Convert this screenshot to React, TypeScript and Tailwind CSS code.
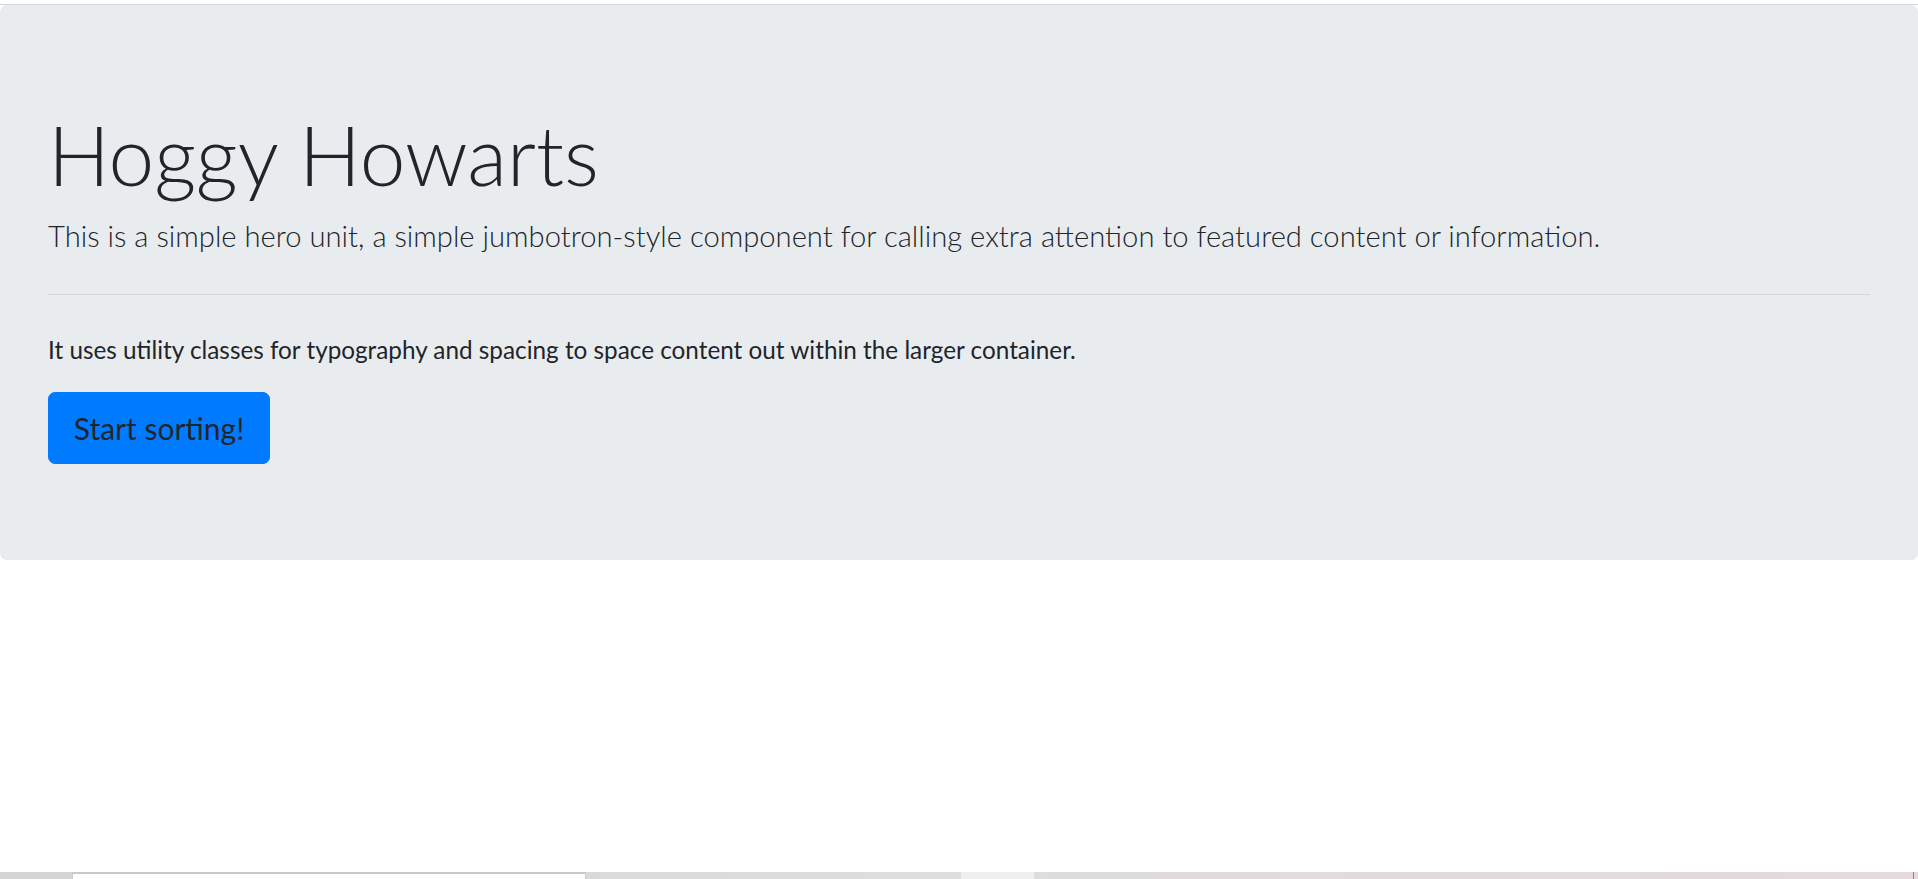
import React from "react";

export default function App() {
  return (
    <div className="flex h-[879px] flex-col bg-white font-['Lato',sans-serif] text-[#212529]">
      <div className="h-[4px] shrink-0 bg-white" />
      <div className="h-[1px] shrink-0 bg-[#d6d7d9]" />
      <section className="shrink-0 rounded-[7px] bg-[#e9ecef] px-[48px] pt-[99px] pb-[96px]">
        <h1 className="text-[82px] leading-[101px] font-light">Hoggy Howarts</h1>
        <p className="mt-[9px] text-[29.2px] leading-[44px] font-light">
          This is a simple hero unit, a simple jumbotron-style component for calling extra attention to featured content or information.
        </p>
        <hr className="mt-[36px] border-0 border-t border-[#d3d6d9]" />
        <p className="mt-[37px] text-[24.3px] leading-[36px]">
          It uses utility classes for typography and spacing to space content out within the larger container.
        </p>
        <button
          type="button"
          className="mt-[24px] flex h-[72px] w-[222px] items-center justify-center rounded-[7px] border border-[#007bff] bg-[#007bff] text-[30px] leading-[45px] text-[#212529]"
        >
          Start sorting!
        </button>
      </section>
      <div className="flex-1" />
      <div className="flex h-[7px] shrink-0">
        <div className="w-[72px] bg-[#d6d6d6]" />
        <div className="w-[514px] border-x border-t-2 border-[#c9c9c9] bg-white" />
        <div className="w-[375px] bg-gradient-to-r from-[#dadada] to-[#dedede]" />
        <div className="w-[73px] bg-[#efefef]" />
        <div className="flex-1 bg-gradient-to-r from-[#dedcdd] to-[#e5d9de]" />
        <div className="w-[1px] bg-[#8c8688]" />
        <div className="w-[4px] bg-[#e5d9de]" />
      </div>
    </div>
  );
}
